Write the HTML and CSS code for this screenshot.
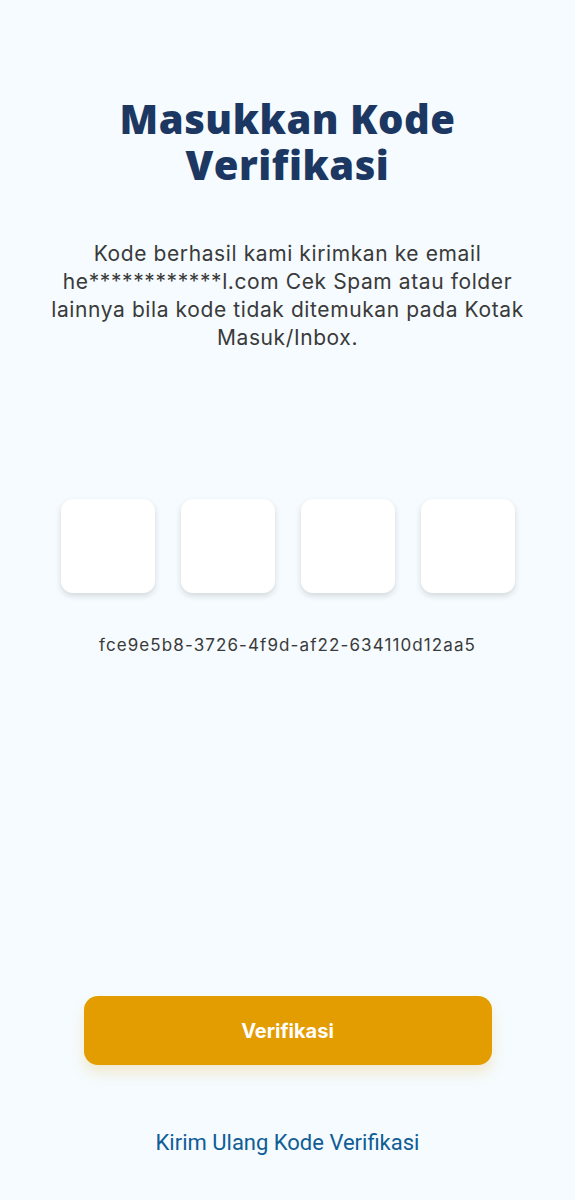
FILE: index.html
```html
<!DOCTYPE html>
<html lang="id">
<head>
  <meta charset="UTF-8">
  <title>Masukkan Kode Verifikasi</title>
  <link rel="stylesheet" href="styles.css">
</head>
<body>
  <main class="page">
    <h1 class="title">Masukkan Kode Verifikasi</h1>
    <p class="desc">Kode berhasil kami kirimkan ke email he************l.com Cek Spam atau folder lainnya bila kode tidak ditemukan pada Kotak Masuk/Inbox.</p>

    <div class="otp">
      <input class="otp-box" type="text" maxlength="1">
      <input class="otp-box" type="text" maxlength="1">
      <input class="otp-box" type="text" maxlength="1">
      <input class="otp-box" type="text" maxlength="1">
    </div>

    <p class="token">fce9e5b8-3726-4f9d-af22-634110d12aa5</p>

    <div class="actions">
      <button class="btn-verify">Verifikasi</button>
      <a class="resend" href="#">Kirim Ulang Kode Verifikasi</a>
    </div>
  </main>
</body>
</html>
```

FILE: styles.css
```css
body { margin: 0; background: #f5fbfe; font-family: "Open Sans", sans-serif; }
.page { display: flex; flex-direction: column; align-items: center; min-height: 1200px; box-sizing: border-box; padding-top: 96px; }
.title { margin: 0; width: 360px; text-align: center; font-family: "Open Sans", sans-serif; font-weight: 800; font-size: 40px; line-height: 46px; color: #1c3862; letter-spacing: 0.5px; }
.desc { margin: 52px 0 0; width: 494px; text-align: center; font-family: "Inter", sans-serif; font-size: 21px; line-height: 28px; color: #3a3a3a; letter-spacing: 0.6px; }
.otp { display: flex; gap: 26px; margin-top: 147px; }
.otp-box { width: 94px; height: 94px; box-sizing: border-box; border: none; border-radius: 12px; background: #fff; box-shadow: 0 3px 6px rgba(0, 0, 0, 0.14); font-size: 28px; text-align: center; }
.token { margin: 42px 0 0; font-family: "Inter", sans-serif; font-size: 17px; color: #3a3a3a; letter-spacing: 1.1px; }
.actions { margin-top: auto; padding-bottom: 45px; display: flex; flex-direction: column; align-items: center; }
.btn-verify { width: 408px; height: 69px; border: none; border-radius: 14px; background: #e39d00; color: #fff; font-family: "Inter", sans-serif; font-weight: 700; font-size: 20px; box-shadow: 0 8px 14px rgba(227, 157, 0, 0.18); }
.resend { margin-top: 65px; font-family: Roboto, sans-serif; font-size: 22px; color: #0f5d96; text-decoration: none; }
```
